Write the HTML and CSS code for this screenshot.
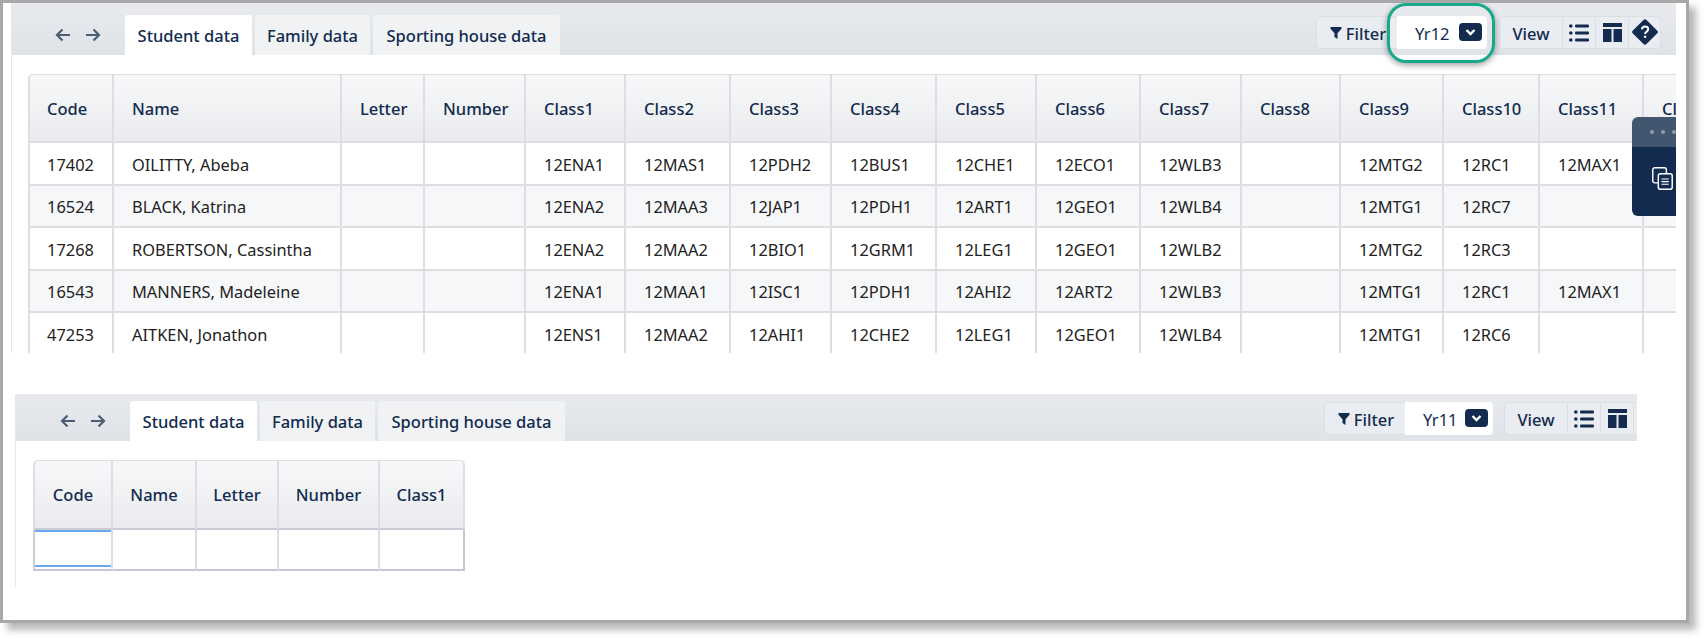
FILE: index.html
```html
<!DOCTYPE html>
<html lang="en">
<head>
<meta charset="utf-8">
<title>Student data</title>
<link rel="stylesheet" href="styles.css">
</head>
<body>
<svg class="defs" width="0" height="0" aria-hidden="true">
  <defs>
    <symbol id="i-left" viewBox="0 0 16 14"><path d="M15 7H2M7.500 1.500 2 7l5.500 5.500" fill="none" stroke="currentColor" stroke-width="2.200"/></symbol>
    <symbol id="i-right" viewBox="0 0 16 14"><path d="M1 7h13M8.500 1.500 14 7l-5.500 5.500" fill="none" stroke="currentColor" stroke-width="2.200"/></symbol>
    <symbol id="i-funnel" viewBox="0 0 12 12"><path d="M.5 0h11v1.700L7.500 6.300V12L4.500 10V6.300L.5 1.700z" fill="currentColor"/></symbol>
    <symbol id="i-list" viewBox="0 0 20 18"><g fill="currentColor"><circle cx="1.800" cy="2" r="1.800"/><circle cx="1.800" cy="9" r="1.800"/><circle cx="1.800" cy="16" r="1.800"/><rect x="6" y=".5" width="14" height="3" rx="1.200"/><rect x="6" y="7.500" width="14" height="3" rx="1.200"/><rect x="6" y="14.500" width="14" height="3" rx="1.200"/></g></symbol>
    <symbol id="i-layout" viewBox="0 0 19 19"><g fill="currentColor"><rect width="19" height="4"/><rect y="6" width="8.500" height="13"/><rect x="10.500" y="6" width="8.500" height="13"/></g></symbol>
    <symbol id="i-help" viewBox="0 0 26 26"><path d="M11.500.9a2.100 2.100 0 0 1 3 0l10.600 10.600a2.100 2.100 0 0 1 0 3L14.500 25.100a2.100 2.100 0 0 1-3 0L.9 14.500a2.100 2.100 0 0 1 0-3z" fill="currentColor"/><path d="M9.900 10.300c.2-1.700 1.500-2.700 3.200-2.700 1.800 0 3.100 1 3.100 2.600 0 2.500-3.100 2.500-3.100 4.700" fill="none" stroke="#fff" stroke-width="2"/><circle cx="13.100" cy="17.700" r="1.300" fill="#fff"/></symbol>
    <symbol id="i-chevron" viewBox="0 0 23 18"><rect width="23" height="18" rx="4" fill="currentColor"/><path d="M7.500 7l4 4 4-4" fill="none" stroke="#fff" stroke-width="2.400"/></symbol>
  </defs>
</svg>

<main class="frame">
  <section class="panel panel-top">
    <header class="toolbar">
      <nav class="nav">
        <svg class="arrow"><use href="#i-left"/></svg>
        <svg class="arrow"><use href="#i-right"/></svg>
      </nav>
      <div class="tabs">
        <span class="tab tab-student active">Student data</span>
        <span class="tab tab-family">Family data</span>
        <span class="tab tab-sport">Sporting house data</span>
      </div>
      <div class="controls">
        <div class="group">
          <span class="btn btn-filter"><svg class="funnel"><use href="#i-funnel"/></svg>Filter</span>
          <span class="select">Yr12<svg class="chevron"><use href="#i-chevron"/></svg><i class="ring"></i></span>
        </div>
        <div class="group">
          <span class="btn btn-view">View</span>
          <span class="btn btn-icon"><svg class="ic-list"><use href="#i-list"/></svg></span>
          <span class="btn btn-icon"><svg class="ic-layout"><use href="#i-layout"/></svg></span>
          <span class="btn btn-icon"><svg class="ic-help"><use href="#i-help"/></svg></span>
        </div>
      </div>
    </header>
    <div class="body">
      <table class="grid grid-wide">
        <colgroup>
          <col class="w86"><col class="w228"><col class="w83"><col class="w101"><col class="w100"><col class="w105"><col class="w101"><col class="w105"><col class="w100"><col class="w104"><col class="w101"><col class="w99"><col class="w103"><col class="w96"><col class="w104"><col class="w100">
        </colgroup>
        <thead>
          <tr><th>Code</th><th>Name</th><th>Letter</th><th>Number</th><th>Class1</th><th>Class2</th><th>Class3</th><th>Class4</th><th>Class5</th><th>Class6</th><th>Class7</th><th>Class8</th><th>Class9</th><th>Class10</th><th>Class11</th><th>Class12</th></tr>
        </thead>
        <tbody>
          <tr><td>17402</td><td>OILITTY, Abeba</td><td></td><td></td><td>12ENA1</td><td>12MAS1</td><td>12PDH2</td><td>12BUS1</td><td>12CHE1</td><td>12ECO1</td><td>12WLB3</td><td></td><td>12MTG2</td><td>12RC1</td><td>12MAX1</td><td></td></tr>
          <tr><td>16524</td><td>BLACK, Katrina</td><td></td><td></td><td>12ENA2</td><td>12MAA3</td><td>12JAP1</td><td>12PDH1</td><td>12ART1</td><td>12GEO1</td><td>12WLB4</td><td></td><td>12MTG1</td><td>12RC7</td><td></td><td></td></tr>
          <tr><td>17268</td><td>ROBERTSON, Cassintha</td><td></td><td></td><td>12ENA2</td><td>12MAA2</td><td>12BIO1</td><td>12GRM1</td><td>12LEG1</td><td>12GEO1</td><td>12WLB2</td><td></td><td>12MTG2</td><td>12RC3</td><td></td><td></td></tr>
          <tr><td>16543</td><td>MANNERS, Madeleine</td><td></td><td></td><td>12ENA1</td><td>12MAA1</td><td>12ISC1</td><td>12PDH1</td><td>12AHI2</td><td>12ART2</td><td>12WLB3</td><td></td><td>12MTG1</td><td>12RC1</td><td>12MAX1</td><td></td></tr>
          <tr><td>47253</td><td>AITKEN, Jonathon</td><td></td><td></td><td>12ENS1</td><td>12MAA2</td><td>12AHI1</td><td>12CHE2</td><td>12LEG1</td><td>12GEO1</td><td>12WLB4</td><td></td><td>12MTG1</td><td>12RC6</td><td></td><td></td></tr>
        </tbody>
      </table>
      <aside class="float">
        <div class="float-head"><b></b><b></b><b></b></div>
        <div class="float-body">
          <svg class="copy" viewBox="0 0 20 22"><g fill="none" stroke="#fff" stroke-width="1.400"><rect x=".7" y=".7" width="13" height="14.500" rx="2"/><rect x="6" y="6.500" width="13.300" height="14.800" rx="2" fill="#122b4f"/><path d="M9 11.500h7M9 14h7M9 16.500h7" stroke-width="1.100"/></g></svg>
        </div>
      </aside>
    </div>
  </section>

  <section class="panel panel-bottom">
    <header class="toolbar">
      <nav class="nav">
        <svg class="arrow"><use href="#i-left"/></svg>
        <svg class="arrow"><use href="#i-right"/></svg>
      </nav>
      <div class="tabs">
        <span class="tab tab-student active">Student data</span>
        <span class="tab tab-family">Family data</span>
        <span class="tab tab-sport">Sporting house data</span>
      </div>
      <div class="controls">
        <div class="group">
          <span class="btn btn-filter"><svg class="funnel"><use href="#i-funnel"/></svg>Filter</span>
          <span class="select">Yr11<svg class="chevron"><use href="#i-chevron"/></svg></span>
        </div>
        <div class="group">
          <span class="btn btn-view">View</span>
          <span class="btn btn-icon"><svg class="ic-list"><use href="#i-list"/></svg></span>
          <span class="btn btn-icon"><svg class="ic-layout"><use href="#i-layout"/></svg></span>
          <span class="btn btn-icon"><svg class="ic-help"><use href="#i-help"/></svg></span>
        </div>
      </div>
    </header>
    <div class="body">
      <table class="grid grid-small">
        <colgroup>
          <col class="w80"><col class="w84"><col class="w82"><col class="w101"><col class="w85">
        </colgroup>
        <thead>
          <tr><th>Code</th><th>Name</th><th>Letter</th><th>Number</th><th>Class1</th></tr>
        </thead>
        <tbody>
          <tr><td class="focus"></td><td></td><td></td><td></td><td></td></tr>
        </tbody>
      </table>
    </div>
  </section>
</main>
</body>
</html>
```

FILE: styles.css
```css
* { box-sizing: border-box; }

html, body {
  margin: 0;
  background: #fff;
}

body {
  height: 639px;
  overflow: hidden;
  font-family: "Noto Sans", "Open Sans", sans-serif;
  font-size: 16px;
  color: #122b4f;
}

.defs { position: absolute; }

.frame {
  width: 1689px;
  height: 623px;
  border: 3px solid #a8a8a8;
  background: #fff;
  box-shadow: 7px 7px 7px rgba(0, 0, 0, .28);
}

.panel {
  overflow: hidden;
  border-left: 1px solid #e4e6e8;
}

.panel-top {
  width: 1665px;
  height: 350px;
  margin-left: 8px;
}

.panel-bottom {
  width: 1622px;
  height: 193px;
  margin-top: 41px;
  margin-left: 12px;
}

.toolbar {
  display: flex;
  align-items: flex-end;
  background: linear-gradient(#e8eaee, #dfe2e7);
}

.panel-top .toolbar { height: 52px; }
.panel-bottom .toolbar { height: 47px; }

.nav {
  display: flex;
  gap: 14px;
  width: 113px;
  padding-left: 43px;
  align-self: flex-end;
  height: 40px;
  align-items: center;
  color: #4a5d78;
}

.panel-bottom .nav { width: 114px; padding-left: 44px; }

.arrow { width: 16px; height: 14px; }

.tabs {
  display: flex;
  gap: 3px;
}

.tab {
  display: flex;
  align-items: center;
  justify-content: center;
  height: 40px;
  border-radius: 3px 3px 0 0;
  background: #f0f2f4;
  font-weight: 500;
  font-size: 16.500px;
  white-space: nowrap;
}

.tab.active { background: #fff; }
.tab-student { width: 127px; }
.tab-family { width: 115px; }
.tab-sport { width: 187px; }

.controls {
  display: flex;
  gap: 12px;
  align-self: flex-start;
  margin-left: auto;
  margin-right: 15px;
  flex-shrink: 0;
  font-weight: 500;
  font-size: 16.500px;
}

.panel-top .controls { margin-top: 13px; }
.panel-bottom .controls { margin-top: 8px; margin-right: -29px; gap: 11px; }

.group { display: flex; height: 33px; }

.btn {
  display: flex;
  align-items: center;
  justify-content: center;
  border: 1px solid #dcdfe4;
  border-right-width: 0;
  background: #e9ecf0;
}

.btn:first-child { border-radius: 5px 0 0 5px; }
.btn:last-child { border-right-width: 1px; border-radius: 0 5px 5px 0; }

.btn-filter {
  width: 81px;
  gap: 4px;
  padding: 1px 0 0 2px;
}

.btn-view { width: 63px; padding-top: 1px; }
.btn-icon { width: 33px; }

.funnel { width: 12px; height: 12px; margin-top: -1px; }
.ic-list { width: 20px; height: 18px; }
.ic-layout { width: 19px; height: 19px; }
.ic-help { width: 26px; height: 26px; margin-top: -2px; }

.select {
  position: relative;
  display: flex;
  align-items: center;
  width: 90px;
  padding: 1px 0 0 18px;
  background: #fff;
  border-radius: 0 4px 4px 0;
  font-weight: 400;
}

.panel-bottom .select { width: 88px; }

.chevron {
  width: 23px;
  height: 18px;
  margin: -2px 5px 0 auto;
}

.ring {
  position: absolute;
  left: -10px;
  right: -8px;
  top: -13px;
  bottom: -14px;
  border: 3px solid #17a98a;
  border-radius: 19px;
  box-shadow: 0 2px 6px rgba(0, 0, 0, .4);
}

.body {
  position: relative;
  overflow: hidden;
  padding: 19px 0 0 16px;
}

.panel-bottom .body { padding-left: 17px; }

.panel-top .body { height: 298px; }
.panel-bottom .body { height: 146px; }

.grid {
  table-layout: fixed;
  border-collapse: separate;
  border-spacing: 0;
  font-size: 16.400px;
}

.grid-wide { width: 1716px; }
.grid-small { width: 432px; }

.w80 { width: 80px; }
.w82 { width: 82px; }
.w83 { width: 83px; }
.w85 { width: 85px; }
.w86 { width: 86px; }
.w96 { width: 96px; }
.w99 { width: 99px; }
.w100 { width: 100px; }
.w101 { width: 101px; }
.w103 { width: 103px; }
.w104 { width: 104px; }
.w105 { width: 105px; }
.w84 { width: 84px; }
.w228 { width: 228px; }

th, td {
  padding: 0 0 0 18px;
  border-right: 2px solid #dcdee2;
  border-bottom: 2px solid #dcdee2;
  text-align: left;
  white-space: nowrap;
  overflow: hidden;
}

th {
  height: 69px;
  border-top: 1px solid #dcdee2;
  background: linear-gradient(#f7f8f9, #e9ebee);
  font-weight: 500;
  font-size: 16.500px;
  color: #122b4f;
}

th:first-child, td:first-child {
  padding-left: 17px;
  border-left: 2px solid #dcdee2;
}

th:first-child { border-top-left-radius: 5px; }

td {
  height: 42.500px;
  padding-top: 2px;
  font-weight: 400;
  color: #222;
}

tbody tr:nth-child(even) td { background: #f6f7f9; }

.grid-small th {
  height: 70px;
  padding: 0;
  text-align: center;
  border-bottom-color: #c9ccd2;
}

.grid-small th:last-child { border-top-right-radius: 5px; }

.grid-small td {
  height: 41px;
  border-bottom-color: #c3c9d1;
}

.grid-small td:first-child { border-left-color: #c9ced6; }

.grid-small td:last-child { border-right-color: #c3c9d1; }

td.focus {
  box-shadow: inset 0 2px #6aa9ee, inset 0 -2px #fff, inset 0 -4px #6aa9ee;
}

.float {
  position: absolute;
  top: 62px;
  right: 0;
  width: 44px;
  height: 99px;
  display: flex;
  flex-direction: column;
  border-radius: 6px 0 0 6px;
  overflow: hidden;
}

.float-head {
  display: flex;
  align-items: center;
  gap: 7px;
  height: 30px;
  padding-left: 18px;
  background: #42566f;
}

.float-head b {
  width: 4px;
  height: 4px;
  flex-shrink: 0;
  border-radius: 50%;
  background: #8e9bab;
}

.float-body {
  flex: 1;
  padding: 20px 0 0 20px;
  background: #122b4f;
}

.copy { display: block; width: 21px; height: 23px; }
```
